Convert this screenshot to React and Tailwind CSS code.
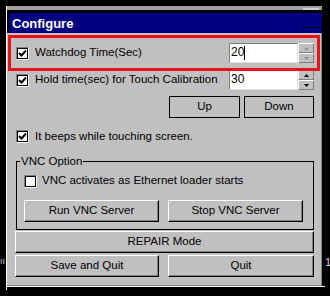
import React from 'react';

const font = { fontFamily: '"Liberation Sans", Arial, sans-serif' };

const Check = ({ checked }) => (
  <span className="w-[13px] h-[13px] shrink-0 bg-white border border-t-[#808080] border-l-[#808080] border-r-white border-b-white flex items-center justify-center">
    <span className="w-[11px] h-[11px] border border-black flex items-center justify-center">
      {checked && (
        <svg width="9" height="9" viewBox="0 0 9 9">
          <path d="M1 4 L3.5 6.5 L8 1.5" stroke="#000" strokeWidth="2" fill="none" />
        </svg>
      )}
    </span>
  </span>
);

const Button = ({ children, className }) => (
  <button className={`h-[22px] bg-[#c0c0c0] border border-t-white border-l-white border-r-black border-b-black text-[11.5px] text-black shadow-[inset_-1px_-1px_0_#808080] ${className}`}>
    {children}
  </button>
);

const FlatButton = ({ children, className }) => (
  <button className={`h-[22px] bg-[#c0c0c0] border border-black text-[11.5px] text-black ${className}`}>
    {children}
  </button>
);

const Spin = ({ dim }) => (
  <div className="flex flex-col w-[16px] h-[20px]">
    {['up', 'down'].map((d) => (
      <div key={d} className="h-[10px] bg-[#c0c0c0] border border-t-white border-l-white border-r-[#808080] border-b-[#808080] flex items-center justify-center">
        <svg width="5" height="3" viewBox="0 0 5 3">
          <path d={d === 'up' ? 'M0 3 L2.5 0 L5 3 Z' : 'M0 0 L2.5 3 L5 0 Z'} fill={dim ? '#909090' : '#000'} />
        </svg>
      </div>
    ))}
  </div>
);

const NumField = ({ value, cursor, dim }) => (
  <div className="flex">
    <div className="w-[69px] h-[20px] bg-white border border-t-[#808080] border-l-[#808080] border-r-[#e0e0e0] border-b-[#e0e0e0] text-[12px] leading-[17px] pl-[1px] flex items-start">
      <span>{value}</span>
      {cursor && <span className="w-px h-[14px] bg-black mt-[2px]" />}
    </div>
    <Spin dim={dim} />
  </div>
);

export default function App() {
  return (
    <div className="w-[330px] h-[296px] bg-black relative overflow-hidden pl-[6px] pt-[6px]" style={font}>
      <span className="absolute left-[325px] top-[254px] text-[11px] text-[#d0d0d0]">1</span>
      <span className="absolute left-0 top-[256px] text-[9px] leading-[10px] text-[#d0d0d0]">ıı</span>

      <div className="w-[319px] h-[284px] flex flex-col border-l border-white">
        <div className="h-[4px] bg-[#a0a0a0] mr-[3px] flex justify-end">
          <div className="w-[16px] h-[4px] mt-[2px] mr-[3px] bg-[#d0d0d0]" />
        </div>
        <div className="h-[3px] bg-black" />
        <div className="h-[20px] bg-[#000080] ml-[2px] mr-[3px] text-white font-bold text-[13px] leading-[20px] pl-[3px] pt-[1px] relative">
          Configure
          <div className="absolute right-[-4px] top-[14px] w-[24px] h-px bg-black" />
        </div>

        <div className="flex-1 bg-[#c0c0c0] mr-[3px] border-r border-b border-[#808080] relative flex flex-col pl-[9px] pr-[7px] text-[11.5px] text-black">
          <div className="absolute left-[1px] top-[2px] w-[312px] h-[36px] border-[3px] border-[#e8101c]" />

          <div className="mt-[10px] h-[20px] flex items-center">
            <Check checked />
            <span className="ml-[6px] flex-1">Watchdog Time(Sec)</span>
            <NumField value="20" cursor dim />
          </div>

          <div className="mt-[7px] h-[20px] flex items-center">
            <Check checked />
            <span className="ml-[6px] flex-1">Hold time(sec) for Touch Calibration</span>
            <NumField value="30" />
          </div>

          <div className="mt-[6px] flex justify-end gap-[4px]">
            <FlatButton className="w-[71px]">Up</FlatButton>
            <FlatButton className="w-[70px]">Down</FlatButton>
          </div>

          <div className="mt-[9px] h-[19px] flex items-center">
            <Check checked />
            <span className="ml-[6px]">It beeps while touching screen.</span>
          </div>

          <div className="mt-[15px] h-[69px] border border-black relative flex flex-col pl-[7px] pr-[10px]">
            <span className="absolute left-[3px] top-[-8px] bg-[#c0c0c0] px-[1px] leading-[14px]">VNC Option</span>
            <div className="mt-[9px] h-[20px] flex items-center">
              <Check />
              <span className="ml-[5px]">VNC activates as Ethernet loader starts</span>
            </div>
            <div className="mt-[9px] flex gap-[9px]">
              <Button className="w-[135px]">Run VNC Server</Button>
              <Button className="w-[135px]">Stop VNC Server</Button>
            </div>
          </div>

          <Button className="mt-[1px] w-[299px] ml-[-1px]">REPAIR Mode</Button>

          <div className="mt-[2px] flex gap-[9px] ml-[-1px]">
            <Button className="w-[144px]">Save and Quit</Button>
            <Button className="w-[146px]">Quit</Button>
          </div>
        </div>
        <div className="h-[4px] border-t border-white" />
      </div>
    </div>
  );
}
